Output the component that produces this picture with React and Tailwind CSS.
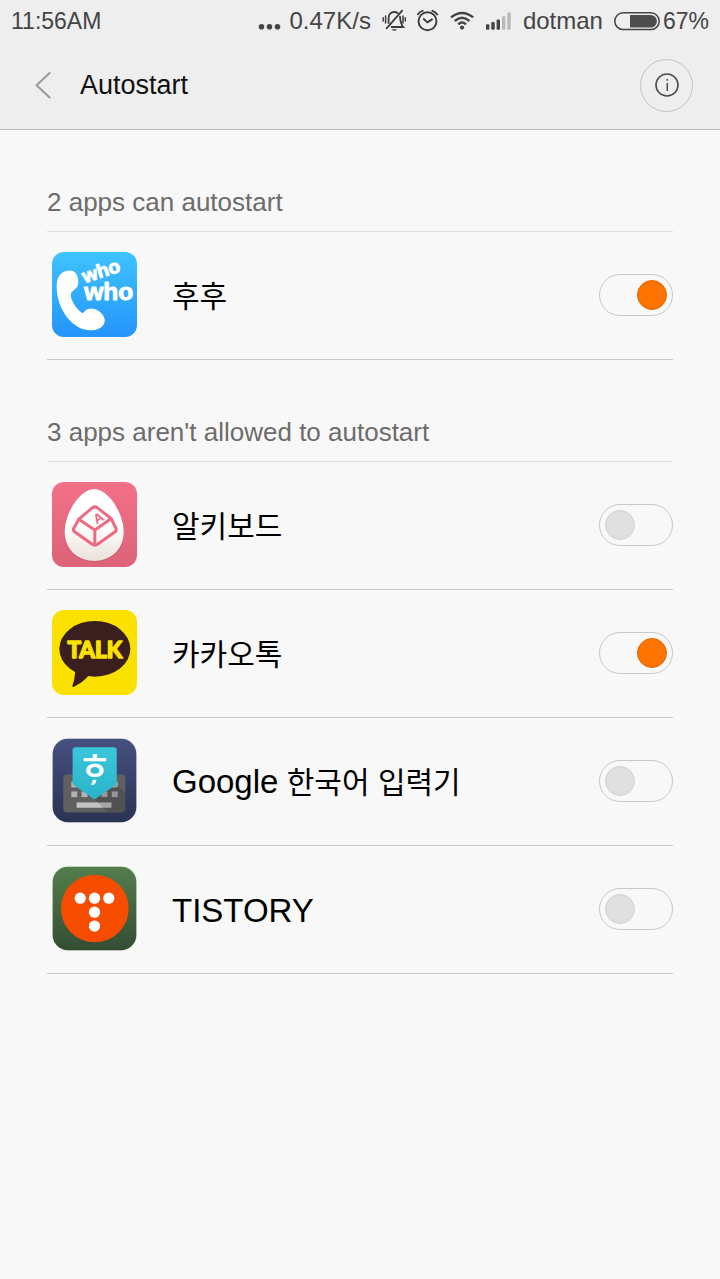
import React, { useState } from 'react';

// App icons, all drawn on a 256 unit square
function WhoWhoIcon() {
  return (
    <svg viewBox="0 0 256 256" className="size-[85px]" aria-hidden="true">
      <defs>
        <linearGradient id="whowho-bg" x1="0" y1="0" x2="0" y2="1">
          <stop offset="0" stopColor="#3fc3ff" />
          <stop offset="1" stopColor="#2494fb" />
        </linearGradient>
      </defs>
      <rect width="256" height="256" rx="36" fill="url(#whowho-bg)" />
      <path
        d="M14 104C14 72 30 56 54 56C72 56 80 74 79 90C79 110 68 110 58 123C51 136 70 170 91 184C99 182 100 170 118 170C138 170 158 188 159 205C159 226 140 236 116 236C60 236 14 170 14 104Z"
        fill="#fff"
      />
      <g
        fill="#fff"
        stroke="#fff"
        strokeWidth="3"
        strokeLinejoin="round"
        fontFamily='"Liberation Sans", sans-serif'
        fontWeight="700"
      >
        <text x="99" y="94" fontSize="58" transform="rotate(-18 99 94)">who</text>
        <text x="97" y="146" fontSize="74">who</text>
      </g>
    </svg>
  );
}

function EggKeyboardIcon() {
  return (
    <svg viewBox="0 0 256 256" className="size-[85px]" aria-hidden="true">
      <defs>
        <linearGradient id="egg-bg" x1="0" y1="0" x2="0" y2="1">
          <stop offset="0" stopColor="#f37088" />
          <stop offset="1" stopColor="#dc6379" />
        </linearGradient>
        <linearGradient id="egg-shell" x1="0" y1="0" x2="0" y2="1">
          <stop offset="0.5" stopColor="#ffffff" />
          <stop offset="1" stopColor="#ebe1da" />
        </linearGradient>
      </defs>
      <rect width="256" height="256" rx="36" fill="url(#egg-bg)" />
      <path d="M127 24C170 24 217 98 217 153C217 208 175 241 127 241C79 241 36 208 36 153C36 98 84 24 127 24Z" fill="#b9495f" opacity="0.5" />
      <path d="M127 21C170 21 216 95 216 150C216 205 175 238 127 238C79 238 38 205 38 150C38 95 84 21 127 21Z" fill="url(#egg-shell)" />
      <g fill="none" stroke="#ee6a82" strokeWidth="9" strokeLinejoin="round" strokeLinecap="round">
        <path d="M121 78Q129 72 137 78L178 110L135 141Q129 145 123 141L81 112Z" />
        <path d="M81 112L65 140Q63 146 68 150L122 188Q129 192 136 188L190 150Q195 146 193 140L178 110" />
        <path d="M129 144V190" />
      </g>
      <text
        x="134"
        y="128"
        fontSize="41"
        fontWeight="700"
        fontFamily='"Liberation Sans", sans-serif'
        fill="#ee6a82"
        transform="rotate(-30 134 128)"
      >
        A
      </text>
    </svg>
  );
}

function TalkIcon() {
  return (
    <svg viewBox="0 0 256 256" className="size-[85px]" aria-hidden="true">
      <rect width="256" height="256" rx="36" fill="#fae100" />
      <ellipse cx="129" cy="117" rx="107" ry="84" fill="#3b1e1e" />
      <path d="M70 176Q70 205 61 229Q62 233 66 231Q94 218 112 196Z" fill="#3b1e1e" />
      <text
        x="129"
        y="144"
        textAnchor="middle"
        fontSize="68"
        fontWeight="700"
        fontFamily="Lato, sans-serif"
        fill="#fae100"
        stroke="#fae100"
        strokeWidth="5"
        strokeLinejoin="round"
      >
        TALK
      </text>
    </svg>
  );
}

function KoreanInputIcon() {
  return (
    <svg viewBox="0 0 256 256" className="size-[85px]" aria-hidden="true">
      <defs>
        <linearGradient id="input-bg" x1="0" y1="0" x2="0" y2="1">
          <stop offset="0" stopColor="#465080" />
          <stop offset="1" stopColor="#2a3352" />
        </linearGradient>
        <linearGradient id="input-pin" x1="0" y1="0" x2="0" y2="1">
          <stop offset="0" stopColor="#3cc6da" />
          <stop offset="1" stopColor="#28b4cb" />
        </linearGradient>
      </defs>
      <rect width="256" height="256" rx="48" fill="#e9eaee" />
      <rect x="2" y="2" width="252" height="252" rx="46" fill="url(#input-bg)" />
      <rect x="34" y="110" width="187" height="114" rx="12" fill="#606060" />
      <g fill="#b2b2b2">
        <rect x="58" y="132" width="18" height="17" />
        <rect x="180" y="132" width="18" height="17" />
        <rect x="58" y="161" width="18" height="17" />
        <rect x="89" y="161" width="18" height="17" />
        <rect x="119" y="161" width="18" height="17" />
        <rect x="149" y="161" width="18" height="17" />
        <rect x="180" y="161" width="18" height="17" />
        <rect x="74" y="194" width="105" height="16" fill="#c4c4c4" />
      </g>
      <path d="M128 185L195 140L221 166V212Q221 224 209 224H168Z" fill="#000" opacity="0.15" />
      <path d="M62 38Q62 28 72 28H185Q195 28 195 38V134Q195 138 192 141L128 185L65 141Q62 138 62 134Z" fill="url(#input-pin)" />
      <text
        x="128"
        y="126"
        textAnchor="middle"
        fontSize="112"
        fontWeight="500"
        fontFamily='"Noto Sans CJK KR", sans-serif'
        fill="#fff"
      >
        ㅎ
      </text>
      <path d="M123 126H134Q133 136 126 141H117Q122 134 123 126Z" fill="#fff" />
    </svg>
  );
}

function TistoryIcon() {
  return (
    <svg viewBox="0 0 256 256" className="size-[85px]" aria-hidden="true">
      <defs>
        <linearGradient id="tistory-bg" x1="0" y1="0" x2="0" y2="1">
          <stop offset="0" stopColor="#547e4c" />
          <stop offset="1" stopColor="#334d33" />
        </linearGradient>
      </defs>
      <rect width="256" height="256" rx="48" fill="#e8ebe8" />
      <rect x="2" y="2" width="252" height="252" rx="46" fill="url(#tistory-bg)" />
      <circle cx="129" cy="128" r="102" fill="#f64c00" />
      <g fill="#fff">
        <circle cx="85" cy="97" r="17" />
        <circle cx="128" cy="97" r="17" />
        <circle cx="171" cy="97" r="17" />
        <circle cx="128" cy="139" r="17" />
        <circle cx="128" cy="181" r="17" />
      </g>
    </svg>
  );
}

// Status bar icons
function DotsIcon() {
  return (
    <svg viewBox="0 0 24 24" className="size-6" fill="#444" aria-hidden="true">
      <circle cx="3.5" cy="17.8" r="2.8" />
      <circle cx="11.5" cy="17.8" r="2.8" />
      <circle cx="19.5" cy="17.8" r="2.8" />
    </svg>
  );
}

function MutedBellIcon() {
  return (
    <svg viewBox="0 0 24 24" className="size-6" fill="none" stroke="#3c3c3c" strokeWidth="1.8" strokeLinecap="round" aria-hidden="true">
      <path d="M20.2 1.6L4.6 19.4" />
      <path d="M6.6 14V9C6.6 5.4 8.8 3 12.3 3C13.6 3 14.8 3.4 15.7 4" />
      <path d="M18 7.6C18.3 11.6 18.4 14.6 21.2 18H9.6" />
      <path d="M9.6 20.2Q12.3 23.2 15 20.2Z" fill="#3c3c3c" stroke="none" />
      <path d="M1.2 8.8V12M3.6 7V14M21 7V14M23.3 8.8V12" strokeWidth="1.5" />
    </svg>
  );
}

function AlarmIcon() {
  return (
    <svg viewBox="0 0 22 24" className="h-6 w-[22px]" fill="none" stroke="#3c3c3c" strokeWidth="1.9" strokeLinecap="round" aria-hidden="true">
      <circle cx="10.5" cy="12.2" r="9" />
      <path d="M6.8 10L10.4 13.4L15 10.4" />
      <path d="M1 5.2Q2.6 2.6 5.6 1.8M15.4 1.8Q18.4 2.6 20.2 5.4" />
    </svg>
  );
}

function WifiIcon() {
  return (
    <svg viewBox="0 0 25 24" className="h-6 w-[25px]" fill="none" stroke="#444" strokeWidth="2.4" aria-hidden="true">
      <path d="M1 8.4Q12 -0.6 23.2 8.4" />
      <path d="M4.8 12Q12 5.6 19.4 12" />
      <path d="M8.2 15.4Q12 11.8 16 15.4" />
      <circle cx="12" cy="18.6" r="2.1" fill="#444" stroke="none" />
    </svg>
  );
}

function SignalIcon() {
  return (
    <svg viewBox="0 0 26 24" className="h-6 w-[26px]" fill="#444" aria-hidden="true">
      <rect x="0" y="15.2" width="3.4" height="5.6" rx="1" />
      <rect x="5.3" y="13" width="3.4" height="7.8" rx="1" />
      <rect x="10.6" y="10.4" width="3.4" height="10.4" rx="1" />
      <rect x="16" y="7.3" width="3.4" height="13.5" rx="1" fill="#b8b8b8" />
      <rect x="21.3" y="3.4" width="3.4" height="17.4" rx="1" fill="#b8b8b8" />
    </svg>
  );
}

function BatteryIcon() {
  return (
    <svg viewBox="0 0 46 24" className="h-6 w-[46px]" aria-hidden="true">
      <rect x="0.8" y="3.8" width="44.4" height="16.8" rx="8.4" fill="none" stroke="#444" strokeWidth="1.5" />
      <path d="M16 5.9H36.6A6.3 6.3 0 0 1 36.6 18.5H16Z" fill="#4d4d4d" />
    </svg>
  );
}

const sections = [
  {
    id: 'allowed',
    title: '2 apps can autostart',
    apps: [{ id: 'whowho', hangul: '후후', Icon: WhoWhoIcon, enabled: true }]
  },
  {
    id: 'denied',
    title: "3 apps aren't allowed to autostart",
    apps: [
      { id: 'egg', hangul: '알키보드', Icon: EggKeyboardIcon, enabled: false },
      { id: 'talk', hangul: '카카오톡', Icon: TalkIcon, enabled: true },
      { id: 'google', latin: 'Google', hangul: ' 한국어 입력기', Icon: KoreanInputIcon, enabled: false },
      { id: 'tistory', latin: 'TISTORY', Icon: TistoryIcon, enabled: false }
    ]
  }
];

function StatusBar() {
  return (
    <div className="flex h-[41px] items-center justify-between px-[11px] text-[23px] leading-6 text-[#444]">
      <span>11:56AM</span>
      <div className="flex items-center gap-[11px] whitespace-nowrap">
        <div className="flex items-center gap-2">
          <DotsIcon />
          <span className="text-2xl leading-6">0.47K/s</span>
        </div>
        <MutedBellIcon />
        <AlarmIcon />
        <WifiIcon />
        <SignalIcon />
        <span className="text-2xl leading-6">dotman</span>
        <div className="flex items-center gap-[3px]">
          <BatteryIcon />
          <span>67%</span>
        </div>
      </div>
    </div>
  );
}

function TitleBar() {
  return (
    <div className="flex h-[88px] items-center pr-[27px] pl-[33px]">
      <button type="button" aria-label="Back" className="mr-[27px]">
        <svg viewBox="0 0 20 28" className="h-7 w-5" fill="none" stroke="#999" strokeWidth="2" strokeLinecap="round" strokeLinejoin="round">
          <path d="M16.6 2L3.6 14.2L16.6 26.4" />
        </svg>
      </button>
      <h1 className="flex-1 text-[27px] leading-8 text-[#111]">Autostart</h1>
      <button
        type="button"
        aria-label="Info"
        className="flex size-[53px] items-center justify-center rounded-full border border-[#c2c2c2]"
      >
        <svg viewBox="0 0 24 24" className="size-6" fill="none" stroke="#4d4d4d">
          <circle cx="12" cy="12" r="11" strokeWidth="1.6" />
          <path d="M12.3 10V18M12.3 6V7.8" strokeWidth="1.5" />
        </svg>
      </button>
    </div>
  );
}

function AppRow({ app }) {
  const [enabled, setEnabled] = useState(app.enabled);
  const { Icon } = app;

  return (
    <li className="border-b border-[#cbcbcb]">
      <label className="flex h-[127px] items-center pb-[2px] pl-[5px]">
        <Icon />
        <span className="ml-[35px] flex-1 whitespace-pre pt-1 text-[33px] leading-10 text-black">
          {app.latin}
          {app.hangul && <span className="text-[30px]">{app.hangul}</span>}
        </span>
        <input
          type="checkbox"
          checked={enabled}
          onChange={e => setEnabled(e.target.checked)}
          className="flex h-[42px] w-[74px] shrink-0 appearance-none items-center rounded-full border border-[#c8c8c8] px-[5px] before:size-[30px] before:rounded-full before:border before:border-[#d2d2d2] before:bg-[#dfdfdf] before:content-[''] checked:justify-end checked:before:border-[#e06500] checked:before:bg-[#ff7300]"
        />
      </label>
    </li>
  );
}

export default function App() {
  return (
    <div className="min-h-screen bg-[#f8f8f8] font-['Liberation_Sans','Noto_Sans_CJK_KR',sans-serif]">
      <header className="border-b border-[#bdbdbd] bg-[#eee]">
        <StatusBar />
        <TitleBar />
      </header>

      <main className="px-[47px]">
        {sections.map(section => (
          <section key={section.id}>
            <h2 className="border-b border-[#dfdfdf] pt-[57px] pb-[14px] text-[26px] leading-[30px] text-[#6c6c6c]">
              {section.title}
            </h2>
            <ul>
              {section.apps.map(app => (
                <AppRow key={app.id} app={app} />
              ))}
            </ul>
          </section>
        ))}
      </main>
    </div>
  );
}
